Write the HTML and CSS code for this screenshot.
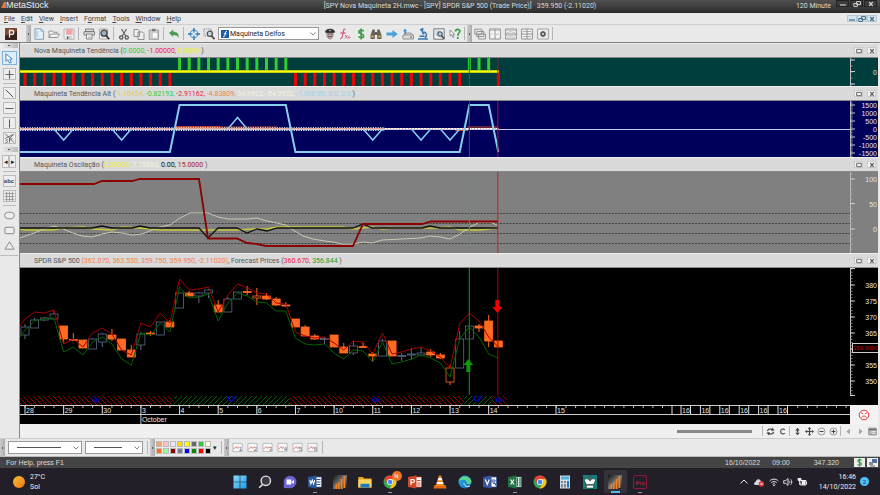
FILE: index.html
```html
<!DOCTYPE html>
<html lang="en">
<head>
<meta charset="utf-8">
<title>MetaStock</title>
<link rel="stylesheet" href="styles.css">
</head>
<body>
<svg class="sprite" aria-hidden="true">
  <defs>
    <linearGradient id="metal" x1="0" y1="0" x2="1" y2="1"><stop offset="0" stop-color="#111"/><stop offset=".5" stop-color="#777"/><stop offset="1" stop-color="#1a1a1a"/></linearGradient>
    <linearGradient id="edgeFill" x1="0" y1="0" x2="1" y2="1"><stop offset="0" stop-color="#2bb6e8"/><stop offset="1" stop-color="#1464b8"/></linearGradient>
    <linearGradient id="winFill" x1="0" y1="0" x2="1" y2="1"><stop offset="0" stop-color="#8adcfb"/><stop offset="1" stop-color="#1c9be8"/></linearGradient>
    <symbol id="i-new" viewBox="0 0 12 12"><path d="M2 .8h6L10.500 3.300V11.300H2z" fill="#dff0fb" stroke="#7d97a8" stroke-width=".9"/><path d="M8 .8V3.300h2.500M4 3v6" fill="none" stroke="#8fb4cb" stroke-width=".9"/></symbol>
    <symbol id="i-open" viewBox="0 0 12 12"><path d="M1 9.500V3h3.500l1 1.300H9V6" fill="#fafafa" stroke="#888" stroke-width=".9"/><path d="M1 9.500 3 6h8.500L9.500 9.500z" fill="#f4f4f4" stroke="#888" stroke-width=".9"/></symbol>
    <symbol id="i-save" viewBox="0 0 12 12"><path d="M1 1h10v10.300H2L1 10z" fill="#eee" stroke="#aaa" stroke-width=".8"/><path d="M3 1.500h6.500v5H3z" fill="#ef8f8f"/><path d="M3 3h6.500M3 4.800h6.500" stroke="#f7d0d0" stroke-width=".7"/><path d="M3.500 8h5v3h-5z" fill="#ccc"/><path d="M4 8.500h1.300v2.500H4z" fill="#555"/></symbol>
    <symbol id="i-print" viewBox="0 0 12 12"><path d="M2.500 1h8v2.500h-8zM1 3.700h10.500V7H1z" fill="#ddd" stroke="#777" stroke-width=".9"/><path d="M3.500 6h5.500v5H3.500z" fill="#fff" stroke="#777" stroke-width=".9"/><path d="M5 8h3M5 9.500h3" stroke="#999" stroke-width=".6"/></symbol>
    <symbol id="i-preview" viewBox="0 0 12 12"><path d="M1.500 1h8v10h-8z" fill="#eee" stroke="#999" stroke-width=".8"/><circle cx="6" cy="5.200" r="3" fill="#9db4c7" stroke="#444" stroke-width="1.300"/><path d="m8 7.500 3.300 3.700" stroke="#333" stroke-width="1.700"/></symbol>
    <symbol id="i-cut" viewBox="0 0 12 12"><path d="m3.500 1 4.300 7.300M8.500 1 4.200 8.300" stroke="#666" stroke-width="1.200"/><circle cx="3.200" cy="9.500" r="1.600" fill="none" stroke="#555" stroke-width="1.300"/><circle cx="8.700" cy="9.500" r="1.600" fill="none" stroke="#555" stroke-width="1.300"/></symbol>
    <symbol id="i-copy" viewBox="0 0 12 12"><path d="M1 1.500h4l1.500 1.500v5.500H1zM5 4h4.500L11 5.500v6H5z" fill="#eee" stroke="#888" stroke-width=".9"/></symbol>
    <symbol id="i-paste" viewBox="0 0 12 12"><path d="M1.200 2h9.300v9.300H1.200z" fill="#ccc" stroke="#999" stroke-width=".9"/><path d="M4 .8h3.500v2.400H4z" fill="#777"/><path d="M4.500 4.500h5v5.700h-5z" fill="#f7f7f7" stroke="#bbb" stroke-width=".5"/></symbol>
    <symbol id="i-undo" viewBox="0 0 12 12"><path d="M1 5 5.200 1.500v2.200c4 0 6 2 5.300 6.300-.8-2.200-2.300-3-5.300-3v2z" fill="#4e9a5c"/></symbol>
    <symbol id="i-target" viewBox="0 0 12 12"><circle cx="6" cy="6" r="3.800" fill="#dceefa" stroke="#5697c9" stroke-width="1.200"/><path d="M6 0v4.500M6 7.500V12M0 6h4.500M7.500 6H12" stroke="#3878ad" stroke-width="1.400"/></symbol>
    <symbol id="i-zoombox" viewBox="0 0 12 12"><path d="M1 1h7v7H1z" fill="none" stroke="#777" stroke-width=".9" stroke-dasharray="1.200 .9"/><circle cx="6.800" cy="5.800" r="2.600" fill="#c8d5df" stroke="#555" stroke-width="1.300"/><path d="m8.500 7.800 3 3.400" stroke="#444" stroke-width="1.700"/></symbol>
    <symbol id="i-expert" viewBox="0 0 12 12"><path d="M1 4.500C1 2 3.500.8 6 .8s5 1.200 5 3.700L6 5.500z" fill="#333"/><path d="M3 5h6c.3 3.500-1 6-3 6S2.700 8.500 3 5z" fill="#c9aaa0" stroke="#555" stroke-width=".6"/><path d="M4 6.300h1.300M6.700 6.300H8M4.300 8.500h3.400" stroke="#333" stroke-width=".8"/><circle cx="6" cy="2.500" r=".8" fill="#ddd"/></symbol>
    <symbol id="i-fx" viewBox="0 0 12 12"><path d="M6.500 1.200C4.500.5 4.400 3 4 5.500S3.200 11 1 10.700M1.500 5h5" fill="none" stroke="#d0648f" stroke-width="1.300"/><path d="m6 7 2.500 3.500M8.700 7 6 10.500M9 9.300c.8-1 2-.8 2 .1s-1.200 1.200-2-.1z" fill="none" stroke="#d0648f" stroke-width=".9"/></symbol>
    <symbol id="i-dollar" viewBox="0 0 12 12"><path d="M8.700 3.300C8 2 4 1.700 3.700 3.800 3.500 6 8.700 5.500 8.700 8c0 2.200-4.200 2.200-5.200.4M6.100.5v11" fill="none" stroke="#379b45" stroke-width="1.600"/></symbol>
    <symbol id="i-binoc" viewBox="0 0 12 12"><path d="M2.500 1.500h2.300V4h2.400V1.500h2.300l2 5.500v4H7.200V7H4.800v4H.5V7z" fill="#6b6152"/><path d="M1.500 7.500h2v2h-2zM8.500 7.500h2v2h-2z" fill="#d2b55b"/></symbol>
    <symbol id="i-next" viewBox="0 0 12 12"><path d="M.5 4.500h6V2L11.800 6 6.500 10V7.500h-6z" fill="#4aa0dd"/></symbol>
    <symbol id="i-upload" viewBox="0 0 12 12"><path d="M1 7h10.500v4H1zM2.500 7 4 5h5l1.500 2" fill="#ddd" stroke="#888" stroke-width=".9"/><path d="m3 .5 2.200 2.700H4V6H2.200V3.200H1z" fill="#3f94cf"/><path d="M8 9.200h2" stroke="#555"/></symbol>
    <symbol id="i-scope" viewBox="0 0 12 12"><path d="m4.500 1 2.200 5.500M3.300 2 6.500.7" stroke="#3b77ad" stroke-width="1.900"/><path d="M7 4c3 .8 3.300 4.600.8 5.800M1 11h10M2.500 8.300h5" fill="none" stroke="#3b77ad" stroke-width="1.500"/></symbol>
    <symbol id="i-explore" viewBox="0 0 12 12"><path d="M.8.8h10.400v10.400H.8z" fill="#eef4f8" stroke="#777" stroke-width="1"/><path d="M2.500 3h4M2.500 5h2.500M2.500 7h2" stroke="#8aa" stroke-width=".7"/><circle cx="7" cy="6" r="2.200" fill="#b8cbd9" stroke="#456" stroke-width="1.100"/><path d="m8.500 7.700 2.500 3" stroke="#345" stroke-width="1.400"/></symbol>
    <symbol id="i-help" viewBox="0 0 12 12"><path d="m1 2 .2 6 1.400-1.200L4 9.500l1-.5-1.200-2.500 1.700-.2z" fill="#fff" stroke="#777" stroke-width=".8"/><path d="M6.500 3.500C6.500.6 11 .8 10.900 3.300 10.800 5 8.800 5.200 8.800 7.700M8.800 9v2" fill="none" stroke="#35a04a" stroke-width="1.700"/></symbol>
    <symbol id="i-cascade" viewBox="0 0 12 12"><path d="M.8 1.200h7v5h-7zM2.800 3.500h7v5h-7zM4.500 6h7v5h-7z" fill="#eee" stroke="#888" stroke-width=".9"/></symbol>
    <symbol id="i-tilev" viewBox="0 0 12 12"><path d="M.6 1h10.800v10H.6zM6 1v10" fill="#f6f6f6" stroke="#888" stroke-width=".9"/><path d="M1 2.300h10M1.500 7l2-1.500M7 7l3-1.500" stroke="#aaa" stroke-width=".8"/></symbol>
    <symbol id="i-tileh" viewBox="0 0 12 12"><path d="M.6 1h10.800v10H.6zM.6 6h10.800" fill="#f6f6f6" stroke="#888" stroke-width=".9"/><path d="M1 2.300h10M1 7.300h10M2 4.700l3-1 5 .8M2 9.700l3-1 5 .8" fill="none" stroke="#aaa" stroke-width=".7"/></symbol>
    <symbol id="i-tileg" viewBox="0 0 12 12"><path d="M.6 1h10.800v10H.6zM.6 6h10.800M6 1v10" fill="#f6f6f6" stroke="#888" stroke-width=".9"/><path d="M2 3.500h8M2 8.500h8" stroke="#999" stroke-width=".8"/></symbol>
    <symbol id="i-gear" viewBox="0 0 12 12"><path d="M.6 1h10.800v10H.6z" fill="#f0f0f0" stroke="#999" stroke-width=".9"/><circle cx="6" cy="6" r="2" fill="none" stroke="#555" stroke-width="1.400"/><path d="M6 2.800v6.400M2.800 6h6.400M3.800 3.800l4.400 4.400M8.200 3.800 3.800 8.200" stroke="#555" stroke-width=".7"/><circle cx="6" cy="6" r=".9" fill="#eee"/></symbol>
    <symbol id="i-pointer" viewBox="0 0 12 12"><path d="m2 1 .2 8 2-1.800L6 11l1.800-.8L6.300 6.800 9 6.500z" fill="#fff" stroke="#4577a8" stroke-width="1"/></symbol>
    <symbol id="i-plus" viewBox="0 0 12 12"><path d="M6 1.500v9M1.500 6h9" stroke="#666" stroke-width="1.300"/></symbol>
    <symbol id="i-diag" viewBox="0 0 12 12"><path d="m2 2 8 8" stroke="#444" stroke-width="1"/></symbol>
    <symbol id="i-horiz" viewBox="0 0 12 12"><path d="M1.500 6h9" stroke="#555" stroke-width="1"/></symbol>
    <symbol id="i-vert" viewBox="0 0 12 12"><path d="M6 1.500v9" stroke="#555" stroke-width="1.100"/></symbol>
    <symbol id="i-fan" viewBox="0 0 12 12"><path d="M10.500 1.500 1 6M1.500 1l9.500 9.500M10.500 1.500 6 6M6 6v4.500M9 5.500 7 8" stroke="#555" stroke-width=".9"/><path d="M4 7.200c-2-.4-2 1.200-.8 1.600s1 2-1.500 1.400" fill="none" stroke="#555" stroke-width=".9"/></symbol>
    <symbol id="i-grid" viewBox="0 0 12 12"><path d="M.8 2.800h10.400M.8 6h10.400M.8 9.200h10.400M2.800.8v10.400M6 .8v10.400M9.200.8v10.400" stroke="#888" stroke-width=".8"/></symbol>
    <symbol id="i-ellipse" viewBox="0 0 12 12"><ellipse cx="6" cy="6" rx="5.200" ry="3.600" fill="#eee" stroke="#777" stroke-width=".9"/></symbol>
    <symbol id="i-rect" viewBox="0 0 12 12"><rect x="1" y="2.500" width="10" height="7" rx="1" fill="#eee" stroke="#777" stroke-width=".9"/></symbol>
    <symbol id="i-tri" viewBox="0 0 12 12"><path d="M6 2 11 10H1z" fill="#eee" stroke="#777" stroke-width=".9"/></symbol>
    <symbol id="i-refresh" viewBox="0 0 12 12"><path d="M2 5.500C2.200 2.500 6 2 8.500 3.500M10 6.500c-.2 3-4 3.500-6.500 2" fill="none" stroke="#444" stroke-width="1.600"/><path d="m8 .8 3.500 3.400L7 5.300zM4 11.200.5 7.800 5 6.700z" fill="#444"/></symbol>
    <symbol id="i-c" viewBox="0 0 12 12"><path d="M9 4C7.800 2 3.500 2.300 3.500 6S7.800 10 9 8" fill="none" stroke="#555" stroke-width="1.600"/></symbol>
    <symbol id="i-updown" viewBox="0 0 12 12"><path d="m6 1 3 3.500H3zM6 11l3-3.500H3zM5 4h2v4H5z" fill="#444"/></symbol>
    <symbol id="i-move" viewBox="0 0 12 12"><path d="M6 0l2.300 2.700H3.700zM6 12l2.300-2.700H3.700zM0 6l2.700-2.300v4.600zM12 6 9.300 3.700v4.600zM5.200 2.500h1.600v7H5.200zM2.500 5.200h7v1.600h-7z" fill="#444"/></symbol>
    <symbol id="i-minus" viewBox="0 0 12 12"><circle cx="6" cy="6" r="4.700" fill="#eee" stroke="#777" stroke-width=".9"/><path d="M3.300 6h5.400" stroke="#444" stroke-width="1.400"/></symbol>
    <symbol id="i-zplus" viewBox="0 0 12 12"><circle cx="6" cy="6" r="4.700" fill="#eee" stroke="#777" stroke-width=".9"/><path d="M3.300 6h5.400M6 3.300v5.400" stroke="#444" stroke-width="1.400"/></symbol>
    <symbol id="i-left" viewBox="0 0 12 12"><path d="M8 2 3 6l5 4z" fill="#aaa"/></symbol>
    <symbol id="i-right" viewBox="0 0 12 12"><path d="m4 2 5 4-5 4z" fill="#aaa"/></symbol>
    <symbol id="i-panel" viewBox="0 0 12 12"><path d="M1 1.500h10v9H1z" fill="#bbb" stroke="#777"/><path d="M1 3.500h10" stroke="#666" stroke-width="1.600"/><path d="M5.500 6h5M5.500 8.500h5" stroke="#eee"/></symbol>
    <symbol id="i-min" viewBox="0 0 8 6"><path d="M1 4h6" stroke="currentColor" stroke-width="1.200"/></symbol>
    <symbol id="i-restore" viewBox="0 0 8 6"><path d="M3.500.6h4v2.900h-4zM.8 2.500h3.700v2.900H.8z" fill="none" stroke="currentColor" stroke-width="1"/></symbol>
    <symbol id="i-box" viewBox="0 0 8 6"><path d="M1.700 1.300h4.600v3.400H1.700z" fill="none" stroke="currentColor" stroke-width="1"/></symbol>
    <symbol id="i-close" viewBox="0 0 8 6"><path d="m2.200 1 3.600 4M5.800 1 2.200 5" stroke="currentColor" stroke-width="1.200"/></symbol>
    <symbol id="i-chart" viewBox="0 0 12 12"><path d="M1 1.500h10v9H1z" fill="#f8f8f8" stroke="#aaa" stroke-width=".8"/><path d="m1.500 8 3-3 1.500 2 1.500-2" fill="none" stroke="#d66" stroke-width=".9"/></symbol>
    <symbol id="i-metastock" viewBox="0 0 14 14"><path d="M0 0h14v14H0z" fill="url(#metal)"/><path d="M2.500 9h1.700v5H2.500zM5 7.500h1.700V14H5zM7.700 4h1.800v10H7.700zM10.500 1.500h1.800V13h-1.800z" fill="#f58220"/></symbol>
    <symbol id="i-chrome" viewBox="0 0 14 14"><circle cx="7" cy="7" r="6.500" fill="#34a853"/><path d="M1.400 3.700A6.500 6.500 0 0 1 12.700 4H7L4.300 8.500z" fill="#ea4335"/><path d="M12.700 4A6.500 6.500 0 0 1 6.500 13.500L9.700 8.500 9.600 5.500 7 4z" fill="#fbc116"/><circle cx="7" cy="7" r="3" fill="#fff"/><circle cx="7" cy="7" r="2.300" fill="#4285f4"/></symbol>
  </defs>
</svg>

<header class="titlebar">
  <div class="brand"><svg width="5" height="8" viewBox="0 0 5 8"><path d="M0 8 3 2h2v6z" fill="#e8772e"/></svg><span>MetaStock</span></div>
  <div class="doc-title">[SPY Nova Maquineta 2H.mwc - [SPY] SPDR S&amp;P 500 (Trade Price)] &nbsp; 359.950 (-2.11020)</div>
  <div class="title-end">
    <span>120 Minute</span>
    <div class="win-buttons dark">
      <button aria-label="Minimize"><svg><use href="#i-min"/></svg></button><button aria-label="Restore"><svg><use href="#i-restore"/></svg></button><button aria-label="Close"><svg><use href="#i-close"/></svg></button>
    </div>
  </div>
</header>

<nav class="menubar">
  <a href="#"><u>F</u>ile</a><a href="#"><u>E</u>dit</a><a href="#"><u>V</u>iew</a><a href="#"><u>I</u>nsert</a><a href="#">F<u>o</u>rmat</a><a href="#"><u>T</u>ools</a><a href="#"><u>W</u>indow</a><a href="#"><u>H</u>elp</a>
  <div class="win-buttons blue">
    <button aria-label="Minimize document"><svg><use href="#i-min"/></svg></button><button aria-label="Restore document"><svg><use href="#i-restore"/></svg></button><button aria-label="Close document"><svg><use href="#i-close"/></svg></button>
  </div>
</nav>

<div class="toolbar">
  <button class="power" aria-label="Power Console"><svg width="12" height="12" viewBox="0 0 12 12"><path d="M0 0h12v12H0z" fill="#3a2119"/><path d="M0 0h12v3L0 8z" fill="#7a4a33"/><path d="M4.500 9.500v-7h2.200c2.800 0 2.800 3.800 0 3.800H4.500" fill="none" stroke="#eee" stroke-width="1.300"/></svg></button>
  <span class="grip"></span>
  <div class="tools">
    <button aria-label="New"><svg><use href="#i-new"/></svg></button>
    <button aria-label="Open"><svg><use href="#i-open"/></svg></button>
    <button aria-label="Save"><svg><use href="#i-save"/></svg></button>
    <span class="sep"></span>
    <button aria-label="Print"><svg><use href="#i-print"/></svg></button>
    <button aria-label="Preview"><svg><use href="#i-preview"/></svg></button>
    <span class="sep"></span>
    <button aria-label="Cut"><svg><use href="#i-cut"/></svg></button>
    <button aria-label="Copy"><svg><use href="#i-copy"/></svg></button>
    <button aria-label="Paste"><svg><use href="#i-paste"/></svg></button>
    <span class="sep"></span>
    <button aria-label="Undo"><svg><use href="#i-undo"/></svg></button>
    <span class="sep"></span>
    <button aria-label="Crosshair"><svg><use href="#i-target"/></svg></button>
    <button aria-label="Zoom box"><svg><use href="#i-zoombox"/></svg></button>
  </div>
  <div class="combo template">
    <svg class="combo-icon" viewBox="0 0 8 8"><path d="M0 0h8v8H0z" fill="#1c5fa8"/><path d="M6 1.500C4.500 1 4.500 2.500 4 4.500S3.500 7 2 6.500M2.800 3.700h2.700" fill="none" stroke="#fff"/></svg>
    <select aria-label="Indicator template"><option>Maquineta Delfos</option></select>
    <svg class="chev" viewBox="0 0 6 4"><path d="m.5.5 2.500 2.500L5.500.5" fill="none" stroke="#888"/></svg>
  </div>
  <div class="tools analysis">
    <button aria-label="Expert Advisor"><svg><use href="#i-expert"/></svg></button>
    <button aria-label="Indicator Builder"><svg><use href="#i-fx"/></svg></button>
    <button aria-label="System Tester"><svg><use href="#i-dollar"/></svg></button>
    <button aria-label="Explorer"><svg><use href="#i-binoc"/></svg></button>
    <button aria-label="Next"><svg><use href="#i-next"/></svg></button>
    <button aria-label="Downloader"><svg><use href="#i-upload"/></svg></button>
    <button aria-label="Inspect"><svg><use href="#i-scope"/></svg></button>
    <button aria-label="Data window"><svg><use href="#i-explore"/></svg></button>
    <button aria-label="Context help"><svg><use href="#i-help"/></svg></button>
  </div>
  <span class="sep"></span>
  <span class="grip"></span>
  <div class="tools windows">
    <button aria-label="Cascade"><svg><use href="#i-cascade"/></svg></button>
    <button aria-label="Tile vertically"><svg><use href="#i-tilev"/></svg></button>
    <button aria-label="Tile horizontally"><svg><use href="#i-tileh"/></svg></button>
    <button aria-label="Tile grid"><svg><use href="#i-tileg"/></svg></button>
    <button aria-label="Layout settings"><svg><use href="#i-gear"/></svg></button>
  </div>
  <span class="sep"></span>
</div>

<div class="work">
  <aside class="drawbar">
    <span class="hgrip"></span>
    <button class="active" aria-label="Select"><svg><use href="#i-pointer"/></svg></button>
    <button class="key" aria-label="Crosshair cursor"><svg><use href="#i-plus"/></svg></button>
    <hr>
    <button class="key" aria-label="Trendline"><svg><use href="#i-diag"/></svg></button>
    <button class="key" aria-label="Horizontal line"><svg><use href="#i-horiz"/></svg></button>
    <button class="key" aria-label="Vertical line"><svg><use href="#i-vert"/></svg></button>
    <button class="key" aria-label="Speed lines"><svg><use href="#i-fan"/></svg></button>
    <span class="hgrip"></span>
    <div class="pager"><button aria-label="Previous tools">◂</button><button aria-label="More tools">▸</button></div>
    <hr>
    <button class="key abc">abc</button>
    <button class="key" aria-label="Grid"><svg><use href="#i-grid"/></svg></button>
    <hr>
    <button aria-label="Ellipse"><svg><use href="#i-ellipse"/></svg></button>
    <button aria-label="Rectangle"><svg><use href="#i-rect"/></svg></button>
    <button aria-label="Triangle"><svg><use href="#i-tri"/></svg></button>
    <hr class="end">
  </aside>

  <main class="panes">
    <section class="pane">
      <header class="pane-head"><h2>Nova Maquineta Tendência (<b class="green">0.0000, </b><b class="red">-1.00000, </b><b class="yellow">0.0000</b> )</h2>
        <div class="win-buttons"><button aria-label="Maximize"><svg><use href="#i-box"/></svg></button><button aria-label="Close pane"><svg><use href="#i-close"/></svg></button></div></header>
      <div class="plot teal"><svg id="trend" class="graph"></svg><svg id="trend-axis" class="axis"></svg></div>
    </section>
    <section class="pane">
      <header class="pane-head"><h2>Maquineta Tendência Alt (<b class="gold">-1.10454, </b><b class="green">-0.82193, </b><b class="red">-2.91162, </b><b class="orange">-4.83809, </b><b class="ivory">54.9922, -54.9922, </b><b class="sky">-1,500.00, 0.0, 0.0</b> )</h2>
        <div class="win-buttons"><button aria-label="Maximize"><svg><use href="#i-box"/></svg></button><button aria-label="Close pane"><svg><use href="#i-close"/></svg></button></div></header>
      <div class="plot navy"><svg id="alt" class="graph"></svg><svg id="alt-axis" class="axis"></svg></div>
    </section>
    <section class="pane">
      <header class="pane-head"><h2>Maquineta Oscilação (<b class="yellow">2.00000, </b><b class="ivory">7.15863, </b><b class="black">0.00, </b><b class="maroon">15.0000</b> )</h2>
        <div class="win-buttons"><button aria-label="Maximize"><svg><use href="#i-box"/></svg></button><button aria-label="Close pane"><svg><use href="#i-close"/></svg></button></div></header>
      <div class="plot gray"><svg id="osc" class="graph"></svg><svg id="osc-axis" class="axis"></svg></div>
    </section>
    <section class="pane">
      <header class="pane-head"><h2>SPDR S&amp;P 500 <b class="orange">(362.070, 363.530, 359.750, 359.950, -2.11020)</b>, Forecast Prices (<b class="red">360.670, </b><b class="forest">356.844</b> )</h2>
        <div class="win-buttons"><button aria-label="Maximize"><svg><use href="#i-box"/></svg></button><button aria-label="Close pane"><svg><use href="#i-close"/></svg></button></div></header>
      <div class="plot price"><svg id="price" class="graph"></svg><svg id="price-axis" class="axis"></svg></div>
      <div class="plot time"><svg id="time" class="graph"></svg>
        <div class="mood"><svg width="12" height="12" viewBox="0 0 12 12"><circle cx="6" cy="6" r="4.800" fill="#fff" stroke="#e33" stroke-width="1"/><path d="m3 3.700 2 1.300M9 3.700 7 5M3.500 8.500C4.500 6.500 7.500 6.500 8.500 8.500" fill="none" stroke="#e33" stroke-width="1"/></svg></div></div>
    </section>
    <div class="scroller">
      <span class="thumb"></span>
      <div class="tools chartnav">
        <span class="sep"></span>
        <button aria-label="Refresh"><svg><use href="#i-refresh"/></svg></button>
        <button aria-label="Center"><svg><use href="#i-c"/></svg></button>
        <span class="sep"></span>
        <button aria-label="Rescale"><svg><use href="#i-updown"/></svg></button>
        <button aria-label="Move"><svg><use href="#i-move"/></svg></button>
        <button aria-label="Zoom out"><svg><use href="#i-minus"/></svg></button>
        <button aria-label="Zoom in"><svg><use href="#i-zplus"/></svg></button>
        <span class="sep"></span>
        <button aria-label="Back"><svg><use href="#i-left"/></svg></button>
        <button aria-label="Forward"><svg><use href="#i-right"/></svg></button>
        <button aria-label="Chart options"><svg><use href="#i-panel"/></svg></button>
      </div>
    </div>
  </main>
</div>

<div class="stylebar">
  <span class="grip"></span>
  <div class="combo line-style"><select aria-label="Line style"><option> </option></select><span class="stroke"></span><svg class="chev" viewBox="0 0 6 4"><path d="m.5.5 2.500 2.500L5.500.5" fill="none" stroke="#888"/></svg></div>
  <div class="combo line-weight"><select aria-label="Line weight"><option> </option></select><span class="stroke"></span><svg class="chev" viewBox="0 0 6 4"><path d="m.5.5 2.500 2.500L5.500.5" fill="none" stroke="#888"/></svg></div>
  <span class="sep"></span><span class="grip"></span>
  <div class="palette" id="palette"></div>
  <button class="more" aria-label="More colors">▾</button>
  <span class="sep"></span><span class="grip"></span>
  <div class="tools favorites">
    <button><svg><use href="#i-chart"/></svg><i>1</i></button><button><svg><use href="#i-chart"/></svg><i>2</i></button><button><svg><use href="#i-chart"/></svg><i>3</i></button><button><svg><use href="#i-chart"/></svg><i>4</i></button><button><svg><use href="#i-chart"/></svg><i>5</i></button><button><svg><use href="#i-chart"/></svg><i>6</i></button>
  </div>
  <span class="sep"></span>
</div>

<footer class="status">
  <span class="hint">For Help, press F1</span>
  <span class="s-date">16/10/2022</span><span class="s-time">09:00</span><span class="s-price">347.320</span>
  <span class="chip"><svg width="9" height="9"><use href="#i-dollar"/></svg></span>
  <span class="chip"><svg width="8" height="9" viewBox="0 0 8 9"><path d="M3 1h5v4H3z" fill="#4a6ea9"/><path d="M0 4h4v3H0z" fill="#889"/><path d="M1 8h5" stroke="#667"/></svg></span>
</footer>

<nav class="taskbar">
  <div class="weather"><span class="sun"></span><div>27°C<br>Sol</div></div>
  <div class="apps">
    <button aria-label="Start"><svg viewBox="0 0 14 14"><path d="M.5.5h6.200v6.200H.5zM7.300.5h6.200v6.200H7.300zM.5 7.300h6.200v6.200H.5zM7.300 7.300h6.200v6.200H7.300z" fill="url(#winFill)"/></svg></button>
    <button aria-label="Search"><svg viewBox="0 0 14 14"><circle cx="7.800" cy="5.800" r="4.700" fill="#3c3a42" stroke="#e4e4e4" stroke-width="1.400"/><path d="m4.500 9.500-3.300 3.300" stroke="#e4e4e4" stroke-width="1.600"/></svg></button>
    <button aria-label="Chat"><svg viewBox="0 0 14 14"><path d="M.8 13V7A6.300 6.300 0 1 1 7 13.300z" fill="#6a64cf"/><path d="M3.500 4.500h4.800v5H3.500zM8.800 6.500l2-1.500v4l-2-1.500z" fill="#fff"/></svg></button>
    <button class="open" aria-label="Word"><svg viewBox="0 0 14 14"><path d="M7 2h6.500v10H7z" fill="#fff" stroke="#3a66ad" stroke-width=".7"/><path d="M8.500 4.500h4M8.500 7h4M8.500 9.500h4" stroke="#2b579a"/><path d="M0 2 8.500.5v13L0 12z" fill="#2b579a"/><path d="m1.800 5 1 4L4.300 5.200 5.500 9l1.200-4" fill="none" stroke="#fff" stroke-width="1.100"/></svg></button>
    <button aria-label="MetaStock"><svg viewBox="0 0 14 14"><use href="#i-metastock"/></svg></button>
    <button aria-label="Files"><svg viewBox="0 0 14 14"><path d="M.3 2h4.500l1.500 1.500h7.200v9H.3z" fill="#e6a722"/><path d="M.3 4.500h13.200v8H.3z" fill="#fbd35c"/><path d="M2.500 8.800h9v3.700h-9z" fill="#1b78c4"/></svg></button>
    <button class="open" aria-label="Chrome, profile N"><svg viewBox="0 0 14 14"><use href="#i-chrome"/></svg><em>N</em></button>
    <button aria-label="PowerPoint"><svg viewBox="0 0 14 14"><path d="M7 2h6.500v10H7z" fill="#fff" stroke="#d24726" stroke-width=".7"/><path d="M9 5.500h3.500M9 8h3.500M9 10h3.500" stroke="#d24726"/><path d="M0 2 8.500.5v13L0 12z" fill="#d24726"/><path d="M3 10V4.500h1.700c2.200 0 2.200 3 0 3H3" fill="none" stroke="#fff" stroke-width="1.200"/></svg></button>
    <button aria-label="VLC"><svg viewBox="0 0 14 14"><path d="M1.500 10h11l1 3.500H.5z" fill="#e56a10"/><path d="M6 .5h2l3.200 10.500H2.800z" fill="#f08b22"/><path d="M5.300 3h3.400l.7 2.200H4.600zM4 7h6l.6 2H3.400z" fill="#f5f5f5"/></svg></button>
    <button aria-label="Edge"><svg viewBox="0 0 14 14"><circle cx="7" cy="7" r="6.500" fill="url(#edgeFill)"/><path d="M.7 6C2 .5 12 -.5 13.400 6.500c.3 3-4.400 3.300-5 1.800C9.300 7 8 4.500 5.500 4.700 3 4.800 1.200 5.300.7 6z" fill="#5ad48b"/><path d="M6 8c-.5 3 3.500 4.500 6 2.800" fill="none" stroke="#d6effb" stroke-width="1"/></svg></button>
    <button aria-label="Visio"><svg viewBox="0 0 14 14"><path d="M7 2h6.500v10H7z" fill="#fff" stroke="#3955a3" stroke-width=".7"/><path d="M9 5h3v2H9zM10 8.500h2.500v2" fill="none" stroke="#3955a3"/><path d="M0 2 8.500.5v13L0 12z" fill="#3955a3"/><path d="m2.300 4.500 2 5 2-5" fill="none" stroke="#fff" stroke-width="1.200"/></svg></button>
    <button class="open" aria-label="Excel"><svg viewBox="0 0 14 14"><path d="M7 2h6.500v10H7z" fill="#fff" stroke="#217346" stroke-width=".7"/><path d="M9.500 3v8M12 3v8" stroke="#217346" stroke-width="1.300"/><path d="M0 2 8.500.5v13L0 12z" fill="#217346"/><path d="m2.500 4.500 3.500 5M6 4.500l-3.500 5" stroke="#fff" stroke-width="1.200"/></svg></button>
    <button aria-label="Chrome"><svg viewBox="0 0 14 14"><use href="#i-chrome"/></svg></button>
    <button aria-label="Calculator"><svg viewBox="0 0 14 14"><path d="M2 .5h10v13H2z" fill="#d3dde4"/><path d="M3 1.500h8v3H3z" fill="#4fb2e0"/><path d="M3 6h2v2H3zM6 6h2v2H6zM3 9h2v3.500H3zM6 9h2v3.500H6z" fill="#7d8a94"/><path d="M9 6h2v6.500H9z" fill="#2477bd"/></svg></button>
    <button aria-label="Chess"><svg viewBox="0 0 14 14"><path d="M0 0h14v14H0z" fill="#147f7a"/><path d="M3.500 9.500 1.500 5.500C2 3 5.500 3.500 7 6c1.500-2.500 5-3 5.500-.5l-2 4zM3.500 10.300h7V13h-7zM6.500 1h1v4h-1zM5.500 2h3v1h-3z" fill="#fff" stroke="#222" stroke-width=".5"/></svg></button>
    <button class="current" aria-label="MetaStock, active"><svg viewBox="0 0 14 14"><use href="#i-metastock"/></svg></button>
    <button class="open pro" aria-label="Pro"><span>Pro</span></button>
  </div>
  <div class="tray">
    <svg width="10" height="10" viewBox="0 0 10 10"><path d="m1.500 6.500 3.500-3.500 3.500 3.500" fill="none" stroke="#eee" stroke-width="1"/></svg>
    <svg class="cloud" width="12" height="10" viewBox="0 0 12 10"><path d="M1 7C1 5 3 5 3 4c1-3 5-2 5 .5 2 0 2.500 3.500 0 3.500H2z" fill="#d6d6da"/><circle cx="8.500" cy="7" r="2.700" fill="#e03131"/><path d="m7.500 6 2 2m0-2-2 2" stroke="#fff" stroke-width=".7"/></svg>
    <svg width="10" height="10" viewBox="0 0 10 10"><path d="M.7 4C3 1.500 7 1.500 9.300 4M2.300 5.700c1.500-1.500 3.900-1.500 5.400 0M3.700 7.300c.8-.7 1.800-.7 2.600 0" fill="none" stroke="#eee" stroke-width="1"/><circle cx="5" cy="8.500" r=".8" fill="#eee"/></svg>
    <svg width="10" height="10" viewBox="0 0 10 10"><path d="M.7 3.700h2L5 1.500v7L2.700 6.300h-2zM6.300 3.700c.8.8.8 1.800 0 2.600M7.700 2.300c1.500 1.500 1.500 3.900 0 5.400" fill="none" stroke="#eee" stroke-width=".9"/></svg>
    <svg width="11" height="10" viewBox="0 0 11 10"><path d="M2.500 3.500h6.500v4.500H3.500zM9.500 5v2" fill="none" stroke="#eee" stroke-width="1"/><path d="M1 1v2.500h3V1M2.500 3.500V8M5 4h3v3.500H5z" fill="#eee" stroke="#eee" stroke-width=".7"/></svg>
    <div class="clock">16:46<br>14/10/2022</div>
    <span class="count">2</span>
  </div>
</nav>
<script src="charts.js"></script>
</body>
</html>
```
FILE: styles.css
```css
* { box-sizing: border-box; }
body {
  margin: 0;
  min-height: 100vh;
  display: flex;
  flex-direction: column;
  background: #e9e9e9;
  color: #333;
  font: 7px/10px Roboto, "Noto Sans", sans-serif;
  overflow-x: hidden;
}
button, select { font: inherit; color: inherit; margin: 0; padding: 0; border: 0; background: none; }
button { display: flex; align-items: center; justify-content: center; }
.sprite { position: absolute; width: 0; height: 0; }

.titlebar {
  display: grid;
  grid-template-columns: 1fr auto 1fr;
  height: 13px;
  background: linear-gradient(#505050, #2b2b2b);
  color: #ddd;
}
.brand { display: flex; font: 9px/10px "Liberation Sans", sans-serif; padding-left: 1px; color: #eee; }
.doc-title { padding-left: 40px; line-height: 13px; }
.title-end { display: flex; justify-content: flex-end; gap: 5px; line-height: 13px; padding-right: 3px; }
.win-buttons { display: flex; align-items: center; gap: 4px; color: #666; }
.win-buttons button { width: 9px; height: 7px; background: #f4f4f4; border: 1px solid #ccc; }
.win-buttons svg { width: 8px; height: 6px; flex: none; }
.dark { gap: 1px; color: #ccc; align-items: flex-start; }
.dark button { width: 13px; background: #3c3c3c; border-color: #222; }
.blue { margin-left: auto; gap: 0; color: #44708c; }
.blue button { width: 10px; background: #d3e4ee; border-color: #b5cad6; }

.menubar {
  display: flex;
  align-items: center;
  gap: 6px;
  height: 12px;
  padding: 0 3px 0 4px;
  border-bottom: 1px solid #cfcfcf;
}
.menubar a { color: #444; text-decoration: none; }

.toolbar {
  display: flex;
  align-items: center;
  height: 18px;
  border-bottom: 1px solid #7d827b;
}
.power { margin: 0 9px 0 5px; }
.grip { align-self: stretch; width: 5px; background: linear-gradient(90deg, #ccc, #aaa); display: flex; align-items: center; justify-content: center; }
.grip::after { content: ""; width: 1px; height: 2px; background: #555; }
.tools { display: flex; align-items: center; }
.tools button { width: 15px; height: 14px; }
.tools svg { width: 12px; height: 12px; }
.sep { width: 1px; height: 13px; margin: 0 2px; background: #b5b5b5; }
.combo { position: relative; height: 13px; border: 1px solid #999; background: #fff; }
.combo select { appearance: none; width: 100%; height: 100%; display: block; padding-left: 11px; color: #222; }
.combo-icon { position: absolute; left: 2px; top: 2px; width: 8px; height: 8px; }
.chev { position: absolute; right: 2px; top: 4px; width: 6px; height: 4px; }
.template { width: 101px; margin: 0 3px 0 2px; }
.analysis { width: 140px; justify-content: space-between; }
.windows { width: 78px; justify-content: space-between; }

.work { flex: 1; display: flex; padding-right: 2px; }
.drawbar {
  width: 20px;
  flex: none;
  display: flex;
  flex-direction: column;
  align-items: center;
  gap: 3px;
  border-right: 1px solid #888;
  padding-right: 1px;
}
.drawbar button { width: 13px; height: 12px; border: 1px solid transparent; }
.drawbar button svg { width: 11px; height: 11px; flex: none; }
.drawbar .key { background: #eee; border-color: #bbb; }
.drawbar .active { background: #dcefff; border-color: #7db2dd; width: 15px; height: 14px; }
.drawbar hr { width: 13px; height: 1px; margin: 0; border: 0; background: #bbb; }
.drawbar .end { width: 100%; margin-top: 1px; }
.hgrip { width: 100%; height: 5px; background: linear-gradient(90deg, #eee, #bbb); display: flex; align-items: center; justify-content: center; }
.hgrip::after { content: ""; width: 2px; height: 1px; background: #555; }
.pager { display: flex; }
.drawbar .pager button { width: 7px; height: 13px; border-color: #bbb; background: #eee; color: #222; }
.drawbar .abc { font: bold 6px/8px "Liberation Sans", sans-serif; color: #444; }

.panes { flex: 1; min-width: 0; }
.pane { background: #000; }
.pane-head {
  height: 15px;
  display: flex;
  align-items: center;
  justify-content: space-between;
  padding: 0 2px 0 14px;
  background: #dadada;
  border-top: 1px solid #eee;
  border-bottom: 1px solid #888;
}
.pane-head h2 { margin: 0; font-size: 7px; font-weight: 400; color: #555; white-space: pre; }
.pane-head b { font-weight: 400; }
.green { color: #32cd32; }
.forest { color: #1e9a2e; }
.red { color: #f0203c; }
.yellow { color: #eeee3a; }
.gold { color: #e8cf3c; }
.orange { color: #f6804a; }
.ivory { color: #f3f3dc; }
.sky { color: #9fd4e6; }
.black { color: #111; }
.maroon { color: #a02020; }
.plot { display: flex; }
.graph { flex: 1; min-width: 0; height: 100%; display: block; }
.axis { width: 28px; height: 100%; flex: none; display: block; }
.teal { height: 28px; background: #003e3e; }
.navy { height: 56px; background: #00005c; }
.gray { height: 81px; background: #808080; }
.price { height: 137px; }
.time { height: 19px; }
.plot text { font: 7px "Liberation Sans", sans-serif; fill: #e4e4e4; }
.plot .last { font-size: 6px; fill: #d00000; }
.plot .sig { fill: none; stroke: #0000b4; stroke-width: 1.5; }
.mood { width: 28px; background: #f3f3f3; display: flex; align-items: center; justify-content: center; }
.scroller { height: 14px; display: flex; align-items: center; justify-content: flex-end; background: #f0f0f0; }
.thumb { width: 75px; height: 3px; background: #888; margin-right: 9px; }
.chartnav button { width: 12px; }
.chartnav svg { width: 9px; height: 9px; }
.chartnav .sep { height: 10px; margin: 0 1px; }

.stylebar { display: flex; align-items: center; height: 19px; border-top: 1px solid #ccc; border-bottom: 1px solid #bbb; }
.line-style { width: 74px; margin: 0 3px; }
.line-weight { width: 58px; margin-right: 2px; }
.stroke { position: absolute; left: 8px; right: 20px; top: 5px; height: 1px; background: #555; }
.palette { display: grid; grid-template-columns: repeat(8, 6px); grid-auto-rows: 6px; gap: 1px; margin-left: 1px; }
.palette span { border: 1px solid #bbb; }
.more { width: 8px; color: #222; }
.favorites { margin-left: 1px; }
.favorites button { position: relative; width: 15px; }
.favorites svg { width: 11px; height: 11px; }
.favorites i { position: absolute; right: 3px; bottom: 3px; font: 6px/6px "Liberation Sans", sans-serif; color: #666; }

.status { display: flex; align-items: center; height: 11px; padding: 0 2px 0 6px; background: #444; color: #ddd; font: 7px/11px "Liberation Sans", sans-serif; }
.hint { flex: 1; }
.s-time { margin: 0 24px 0 12px; }
.s-price { margin-right: 13px; }
.chip { width: 11px; height: 9px; margin-left: 2px; background: #eee; display: flex; align-items: center; justify-content: center; }

.taskbar { height: 27px; display: grid; grid-template-columns: 1fr auto 1fr; align-items: center; background: #231f29; color: #eee; }
.weather { display: flex; align-items: center; gap: 5px; padding-left: 13px; }
.sun { width: 12px; height: 12px; border-radius: 50%; background: linear-gradient(135deg, #f8c03a, #ee7611); }
.apps { display: flex; gap: 2px; }
.apps button { position: relative; width: 23px; height: 23px; }
.apps svg { width: 14px; height: 14px; flex: none; }
.apps .open::after, .apps .current::after { content: ""; position: absolute; bottom: 0; width: 4px; height: 1px; background: #999; }
.apps .current { background: #34313b; border-radius: 2px; }
.apps .current::after { width: 9px; height: 2px; background: #5ab8ee; }
.apps em { position: absolute; right: 0; top: 1px; width: 10px; height: 10px; border-radius: 50%; background: #ee7326; font: 6px/10px Roboto, sans-serif; }
.pro span { width: 14px; height: 14px; border: 1px solid #8a1c38; border-radius: 2px; color: #c42850; font-size: 6px; line-height: 13px; }
.tray { display: flex; align-items: center; justify-content: flex-end; gap: 4px; padding-right: 11px; }
.clock { text-align: right; margin-left: 7px; }
.count { width: 9px; height: 9px; border-radius: 50%; background: #4cc2ff; color: #123; text-align: center; font-size: 6px; line-height: 9px; }
```
FILE: charts.js
```js
const barX = n => 5 + n * 9.66;
const put = (id, markup) => { document.getElementById(id).innerHTML = markup; };
const hline = (y, color, extra = '') => `<line x1="0" x2="100%" y1="${y}" y2="${y}" stroke="${color}" ${extra}/>`;
const vline = (x, color, y1 = 0, y2 = '100%', w = 1) => `<line x1="${x}" x2="${x}" y1="${y1}" y2="${y2}" stroke="${color}" stroke-width="${w}"/>`;
const poly = (pts, color, w = 1) => `<polyline points="${pts.map(p => p.join(',')).join(' ')}" fill="none" stroke="${color}" stroke-width="${w}"/>`;
const range = (a, b) => Array.from({ length: b - a + 1 }, (_, i) => a + i);
const buyX = barX(46), sellX = barX(49) - 0.5;

// Value axis: spine, minor ticks, labelled major ticks.
function axis(id, labels, step, from, to, extra = '') {
  let s = vline(0.5, '#bbb', 0, to);
  for (let y = from; y < to; y += step) s += `<path d="M0 ${y}h2.500" stroke="#aaa" stroke-width=".8"/>`;
  for (const [text, y] of labels) {
    s += `<path d="M0 ${y}h5" stroke="#ccc"/>`;
    if (text !== '') s += `<text x="27" y="${y + 3}" text-anchor="end">${text}</text>`;
  }
  put(id, s + extra);
}

// Trend direction
const green = [...range(16, 27), 46, 47, 48];
put('trend', range(0, 49).map(n => green.includes(n)
  ? vline(barX(n), '#32cd32', 0, 12, 3) : vline(barX(n), '#f00000', 15, 28, 3)).join('')
  + `<path d="M0 13.500H479" stroke="#ffff00" stroke-width="2.500"/>` + vline(buyX, '#0a7a2c') + vline(sellX, '#b01010'));
axis('trend-axis', [['', 2], ['0', 13.500], ['', 26]], 6, 2, 28);

// Alternate trend
const low = 51, high = 4, mid = 28;
const dips = [4, 10, 36, 41, 44].map(n => poly([[barX(n - 1), mid], [barX(n), 39], [barX(n + 1), mid]], '#87ceeb', 1.5)).join('');
put('alt', hline(28.500, '#c8c8e8')
  + `<path d="M0 27.500H479" stroke="#e8a080"/><path d="M155 26H200" stroke="#ff5a1a" stroke-width="1.500"/><path d="M200 26H257M435 29.500H448M447 26H478" stroke="#c8481c"/>`
  + `<path d="M0 26.700H365M0 29.500H365" stroke="#eee" stroke-dasharray="1.200 1.200"/><path d="M365 27.500H477" stroke="#fff" stroke-dasharray="2 1"/>`
  + dips + poly([[barX(21), mid], [barX(22), 16.500], [barX(23), mid]], '#87ceeb', 1.500)
  + poly([[0, low], [barX(15), low], [barX(16), high], [barX(27), high], [barX(28), low], [barX(45), low], [barX(46), high], [barX(48), high], [barX(49), low]], '#87ceeb', 2)
  + vline(buyX, '#0a6a3c') + vline(sellX, '#b01030'));
axis('alt-axis', [1500, 1000, 500, 0, -500, -1000, -1500].map((v, i) => [v, 4 + i * 8]), 1.600, 1, 56);

// Oscillator
const ivory = [[0, 66], [14, 61], [24, 57], [34, 54], [43, 57], [53, 61], [62, 64], [72, 65], [82, 62], [92, 60], [102, 61], [112, 63], [122, 62], [130, 59], [140, 55], [150, 53], [160, 46], [170, 41], [180, 41], [188, 41], [198, 45], [208, 47], [227, 47], [237, 46], [247, 49], [266, 53], [273, 58], [283, 64], [293, 67], [305, 69], [313, 70], [322, 72], [333, 72], [343, 70], [352, 71], [362, 68], [382, 67], [401, 66], [410, 64], [420, 65], [430, 67], [440, 62], [450, 55], [460, 50], [470, 50], [477, 53]];
const yellow = [[0, 57], [5, 58], [33, 58], [43, 56], [63, 55], [73, 57], [92, 58], [102, 55], [120, 56], [140, 58], [218, 58], [233, 57], [247, 57], [257, 55], [310, 55], [322, 55], [333, 57], [352, 55], [362, 57], [372, 56], [417, 56], [430, 55], [440, 58], [460, 58], [477, 56]];
const black = [[0, 56], [72, 56], [82, 54], [92, 56], [112, 56], [120, 54], [130, 56], [179, 56], [188, 66], [198, 56], [217, 56], [227, 61], [237, 57], [247, 59], [257, 56], [333, 56], [343, 52], [352, 56], [402, 56], [410, 54], [420, 56], [478, 56]];
const maroon = [[0, 12], [74, 12], [82, 9], [112, 9], [120, 7], [179, 7], [188, 66.500], [217, 66.500], [227, 71], [237, 72], [246, 74], [333, 74], [343, 52], [402, 52], [411, 49.500], [478, 49.500]];
put('osc', [41.500, 51.500, 61.500, 71.500].map(y => hline(y, '#404040', 'stroke-dasharray="2 1.200"')).join('')
  + poly(yellow, '#c8c83c', 1.300) + poly(ivory, '#c8c8b4') + poly(black, '#111', 1.300) + poly(maroon, '#8b0000', 1.800)
  + vline(buyX, '#3caa3c') + vline(sellX, '#c02020'));
axis('osc-axis', [['100', 7], ['50', 31.500], ['0', 57]], 5, 2, 81);

// Price bars: [kind, body top, body bottom, high, low]; f filled, b blue outline, o orange outline.
const bars = [
  ['b', 59, 67, 56, 71], ['b', 52, 60, 50, 60], ['b', 50, 52, 49, 53], ['b', 46, 51, 43, 51], ['f', 58, 71, 58, 75],
  ['f', 71.5, 72.5, 65, 72], ['f', 72, 80, 72, 80], ['b', 71, 81, 70, 81], ['b', 66, 74, 65, 79], ['f', 67, 71, 61, 73],
  ['f', 71, 82, 71, 82], ['f', 82, 89, 77, 89], ['b', 66, 77, 64, 82], ['f', 65, 66, 63, 68], ['b', 54, 67, 54, 67],
  ['f', 54, 59, 52, 59], ['b', 25, 40, 25, 40], ['f', 25, 28, 23, 28], ['b', 25, 28, 24, 35], ['b', 22, 25, 21, 30],
  ['f', 37, 44, 32, 44], ['b', 31, 44, 29, 44], ['b', 24, 31, 24, 31], ['f', 23.5, 24.5, 18, 27], ['o', 28, 30, 20, 37],
  ['f', 28, 31, 25, 32], ['f', 31, 37, 29, 38], ['f', 37, 38, 34, 39], ['f', 51, 59, 51, 59], ['f', 59, 68, 57, 68],
  ['f', 68, 71, 66, 72], ['b', 70.5, 71.5, 69, 76], ['f', 67, 79, 67, 79], ['f', 79, 85, 75, 85], ['b', 78, 85, 73, 87],
  ['f', 78.500, 79.500, 74, 80], ['f', 86, 88, 84, 93], ['b', 73, 88, 71, 88], ['f', 73, 88, 73, 88], ['b', 87.500, 88.500, 85, 93],
  ['b', 86, 87, 80, 92], ['b', 85, 87, 80, 87], ['f', 84, 87, 81, 89], ['f', 87, 90, 85, 91], ['o', 100, 114, 97, 117],
  ['b', 71, 100, 63, 100], ['b', 58, 71, 58, 71], ['f', 58, 60, 56, 64], ['f', 53, 73, 47, 79], ['f', 73, 79, 73, 79]
];
const upper = [51, 44, 45, 42, 76, 71, 79, 65, 60, 66, 82, 87, 55, 59, 45, 55, 11, 22, 21, 19, 44, 27, 16, 20, 25, 26, 35, 36, 64, 68, 70, 69, 75, 82, 73, 74, 86, 65, 86, 84, 81, 79, 83, 89, 100, 56, 45, 53, 69, 79];
const lower = [62, 53, 51, 50, 84, 79, 87, 74, 69, 76, 91, 97, 65, 67, 55, 64, 19, 30, 29, 26, 53, 35, 25, 28, 34, 35, 43, 43, 70, 76, 77, 76, 85, 91, 82, 83, 94, 74, 96, 94, 91, 87, 90, 95, 109, 71, 59, 69, 86, 90];
const candle = ([kind, top, bottom, hi, lo], n) => {
  const x = barX(n), color = kind === 'b' ? '#586c86' : '#ff6a20';
  const fill = kind === 'f' ? color : '#000';
  return `<path d="M${x} ${hi}V${lo}" stroke="${color}"/><rect x="${x - 4}" y="${top}" width="8" height="${Math.max(bottom - top, 1)}" fill="${fill}" stroke="${color}" stroke-width=".8"/>`;
};
const bands = [['r', 0, 154], ['g', 154, 270], ['r', 270, 444], ['g', 444, 473], ['r', 473, 487]];
put('price', `<defs>
  <pattern id="r" width="5" height="5" patternUnits="userSpaceOnUse"><path d="M-1-1 6 6M-1 4 1 6M4-1 6 1" stroke="#a00000" stroke-width=".9"/></pattern>
  <pattern id="g" width="5" height="5" patternUnits="userSpaceOnUse"><path d="M-1 6 6-1M-1 1 1-1M4 6 6 4" stroke="#006a00" stroke-width=".9"/></pattern></defs>`
  + bands.map(([p, a, b]) => `<rect x="${a}" y="128" width="${b - a}" height="9" fill="url(#${p})"/>`).join('')
  + [76, 356, 479].map(x => `<path class="sig" d="M${x - 3} 130a3 3 0 1 0 6 1M${x - 2} 129l5 4"/>`).join('')
  + [211, 457].map(x => `<path class="sig" d="M${x - 3} 129c0 5 6 5 6 0M${x - 4} 129h3m2 0h3"/>`).join('')
  + bars.map(candle).join('')
  + poly([[0, 58], ...upper.map((y, n) => [barX(n), y])], '#a80000')
  + poly([[0, 69], ...lower.map((y, n) => [barX(n), y])], '#006400')
  + vline(buyX, '#0a7a0a', 0, 127, 1.300) + vline(sellX, '#b00000', 0, 127)
  + `<path d="m${buyX - 1} 91 5 6h-3v7h-4v-7h-3z" fill="#0a960a"/><path d="m${sellX - 0.500} 45 5-6h-3v-7h-4v7h-3z" fill="#f00000"/>`);
axis('price-axis', [['', 0.500], ...[380, 375, 370, 365, 360, 355, 350].map((v, i) => [v === 360 ? '' : v, 17 + i * 16]), ['', 127.500]], 3.200, 1, 128,
  '<rect x="2.500" y="75.500" width="27" height="9" fill="#000" stroke="#ccc"/><text class="last" x="3" y="82">359.9500</text>');

// Time scale
const days = [28, 29, 30, 3, 4, 5, 6, 7, 10, 11, 12, 13, 14];
let t = hline(0.500, '#ccc') + hline(9.500, '#ccc');
for (const n of range(0, 85)) if (n < 67 || n > 79) t += vline(barX(n), '#bbb', 0, 3);
days.forEach((d, i) => { t += vline(barX(i * 4), '#ddd', 0, 9) + `<text x="${barX(i * 4) + 1}" y="8">${d}</text>`; });
t += vline(536, '#ddd', 0, 9) + '<text x="537" y="8">15</text>' + vline(652, '#ddd', 0, 9);
for (const i of range(0, 5)) {
  const x = 661 + i * 19.400;
  t += vline(x, '#ddd', 0, 9) + vline(x + 9.500, '#ddd', 0, 9) + `<text x="${x + 1}" y="8">16</text>`;
}
t += vline(barX(12), '#ccc', 9, 19) + `<text x="${barX(12) + 1}" y="17">October</text>`;
put('time', t);

// Drawing colours
const colors = ['#f4a45c', '#ffc0cb', '#e6e6fa', '#ffd700', '#ffff00', '#696969', '#32cd32', '#ffffe0', '#ff6a20', '#98fb98', '#8b0000', '#708090', '#0000ff', '#008a00', '#ff0000', '#000'];
put('palette', colors.map(c => `<span style="background:${c}"></span>`).join(''));
```
